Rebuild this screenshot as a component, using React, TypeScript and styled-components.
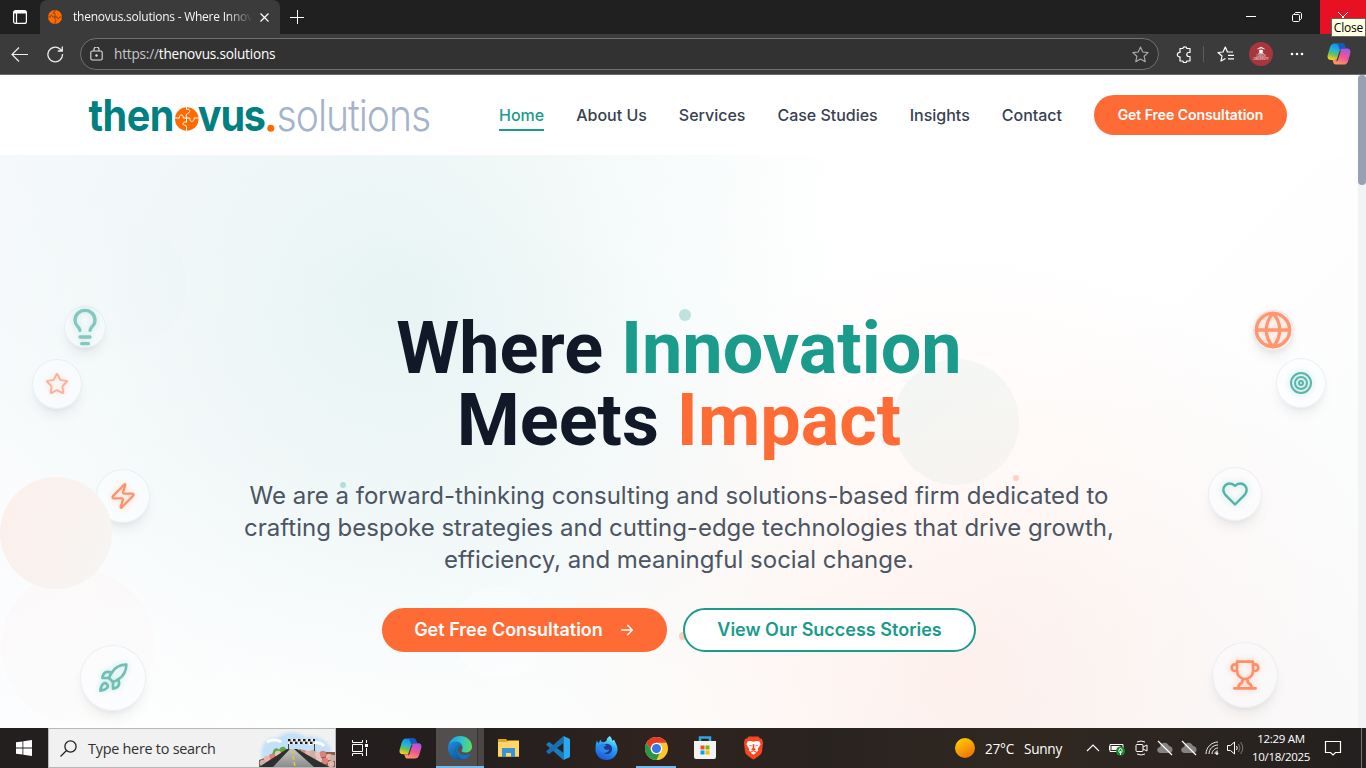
import React from "react";
import styled, { createGlobalStyle } from "styled-components";
import { Globe, Lightbulb, Rocket, Star, Zap } from "lucide-react";

const TEAL = "#1a9b8c";
const ORANGE = "#ff6b35";
const UI_FONT = '"Open Sans", "Noto Sans", sans-serif';

const GlobalStyle = createGlobalStyle`
  * { box-sizing: border-box; }
  body { margin: 0; overflow: hidden; background: #202020; font-family: Inter, sans-serif; }
  svg { display: block; flex: none; }
`;

const Screen = styled.div`
  display: flex;
  flex-direction: column;
  width: 1366px;
  height: 768px;
  overflow: hidden;
`;

/* ---------- browser chrome ---------- */

const TitleBar = styled.div`
  display: flex;
  height: 34px;
  background: #202020;
  font-family: ${UI_FONT};
`;

const TabActions = styled.div`
  width: 40px;
  display: flex;
  align-items: center;
  justify-content: center;
`;

const Tab = styled.div`
  width: 240px;
  display: flex;
  align-items: center;
  padding: 0 8px;
  background: #3b3b3b;
  border-radius: 7px 7px 0 0;
  color: #f5f5f5;
`;

const TabTitle = styled.div`
  width: 178px;
  margin-left: 11px;
  margin-right: 9px;
  overflow: hidden;
  white-space: nowrap;
  font-size: 12px;
  line-height: 18px;
  letter-spacing: -0.24px;
  mask-image: linear-gradient(90deg, #000 154px, transparent 180px);
`;

const NewTab = styled.div`
  width: 34px;
  display: flex;
  align-items: center;
  justify-content: center;
`;

const WindowControls = styled.div`
  position: relative;
  display: flex;
  margin-left: auto;
`;

const WindowButton = styled.div<{ $danger?: boolean }>`
  width: 46px;
  height: 34px;
  display: flex;
  align-items: center;
  justify-content: center;
  background: ${(p) => (p.$danger ? "#e81123" : "transparent")};
`;

const Tooltip = styled.div`
  position: absolute;
  right: 0;
  top: 18px;
  width: 35px;
  height: 19px;
  z-index: 3;
  background: #ffffe1;
  border: 1px solid #646464;
  color: #000;
  font-size: 12px;
  line-height: 17px;
  text-align: center;
  letter-spacing: -0.2px;
`;

const Toolbar = styled.div`
  display: flex;
  align-items: center;
  height: 41px;
  padding: 0 15px 0 11px;
  background: #3b3b3b;
  border-bottom: 1px solid #6a6a6a;
  font-family: ${UI_FONT};
`;

const ReloadIcon = styled.svg`
  margin-left: 19px;
  margin-right: 1px;
`;

const AddressBar = styled.div`
  display: flex;
  align-items: center;
  width: 1079px;
  height: 32px;
  margin-left: 15px;
  padding: 0 9px 0 9px;
  border: 1px solid #707070;
  border-radius: 16px;
  background: #323232;
`;

const Url = styled.div`
  margin-left: 11px;
  flex: 1;
  color: #fff;
  font-size: 13.6px;
  letter-spacing: -0.2px;
  line-height: 20px;
  span { color: #c8c8c8; }
`;

const ToolbarActions = styled.div`
  display: grid;
  flex: 1;
  grid-template-columns: 38px 1px 42px 30px 42px 1fr;
  align-items: center;
  justify-items: center;
  padding-left: 6px;
  > :last-child { justify-self: end; }
`;

const Divider = styled.div`
  width: 1px;
  height: 16px;
  background: #5d5d5d;
`;

/* ---------- website ---------- */

const Viewport = styled.div`
  display: flex;
  height: 653px;
  background: #fff;
`;

const Page = styled.div`
  width: 1358px;
  height: 653px;
  overflow: hidden;
`;

const ScrollTrack = styled.div`
  width: 8px;
  background: #f1f3f5;
`;

const ScrollThumb = styled.div`
  height: 110px;
  background: #98a1b3;
  border-radius: 4px;
`;

const SiteHeader = styled.header`
  height: 80px;
  display: flex;
  align-items: center;
  justify-content: space-between;
  padding: 0 71px 0 88px;
  background: #fff;
`;

const Nav = styled.nav`
  display: flex;
  align-items: center;
  gap: 32px;
`;

const NavLink = styled.a<{ $active?: boolean }>`
  height: 32px;
  padding-top: 4px;
  border-bottom: 2px solid ${(p) => (p.$active ? TEAL : "transparent")};
  color: ${(p) => (p.$active ? TEAL : "#374151")};
  font-size: 16px;
  font-weight: 500;
  line-height: 24px;
  letter-spacing: -0.01px;
  white-space: nowrap;
`;

const HeaderButton = styled.a`
  width: 193px;
  height: 40px;
  border-radius: 20px;
  background: ${ORANGE};
  color: #fff;
  font-size: 14px;
  font-weight: 600;
  line-height: 40px;
  letter-spacing: -0.05px;
  text-align: center;
`;

const Hero = styled.section`
  position: relative;
  height: 573px;
  padding-top: 158px;
  overflow: hidden;
  background:
    radial-gradient(ellipse 460px 400px at 400px 135px, rgba(26, 155, 140, 0.085), rgba(26, 155, 140, 0.036) 50%, transparent),
    radial-gradient(ellipse 430px 430px at 965px 520px, rgba(255, 107, 53, 0.09), rgba(255, 107, 53, 0.04) 50%, transparent),
    radial-gradient(ellipse 420px 320px at 480px 380px, rgba(26, 120, 140, 0.035), transparent),
    linear-gradient(135deg, #f6f9fb 0%, #fff 45%, #fff 65%, #f9fafb 100%);
`;

const Orb = styled.i<{ $x: number; $y: number; $size: number; $fill: string }>`
  position: absolute;
  left: ${(p) => p.$x - p.$size / 2}px;
  top: ${(p) => p.$y - 155 - p.$size / 2}px;
  width: ${(p) => p.$size}px;
  height: ${(p) => p.$size}px;
  border-radius: 50%;
  background: ${(p) => p.$fill};
`;

const FloatingBadge = styled.div<{ $x: number; $y: number; $size: number; $color: string; $alpha: number; $glass: number }>`
  position: absolute;
  left: ${(p) => p.$x - p.$size / 2}px;
  top: ${(p) => p.$y - 155 - p.$size / 2}px;
  width: ${(p) => p.$size}px;
  height: ${(p) => p.$size}px;
  display: flex;
  align-items: center;
  justify-content: center;
  border: 1px solid rgba(222, 230, 243, 0.6);
  border-radius: 50%;
  background: rgba(252, 253, 255, ${(p) => p.$glass});
  box-shadow: 0 9px 14px -3px rgba(0, 0, 0, 0.07), 0 4px 6px -4px rgba(0, 0, 0, 0.07);
  color: ${(p) => p.$color};
  svg {
    opacity: ${(p) => p.$alpha};
    filter: drop-shadow(0 0 3px ${(p) => p.$color}66);
  }
`;

const HeroContent = styled.div`
  position: relative;
  display: flex;
  flex-direction: column;
  align-items: center;
  text-align: center;
`;

const Headline = styled.h1`
  margin: 0;
  color: #111827;
  font-family: Roboto, sans-serif;
  font-size: 72px;
  font-weight: 700;
  line-height: 72px;
`;

const Accent = styled.span<{ $tone: string }>`
  color: ${(p) => p.$tone};
`;

const Lead = styled.p`
  width: 896px;
  margin: 23px 0 32px;
  color: #4b5563;
  font-size: 24px;
  line-height: 32px;
`;

const Actions = styled.div`
  display: flex;
  gap: 16px;
`;

const ActionButton = styled.a<{ $outlined?: boolean }>`
  display: flex;
  align-items: center;
  justify-content: center;
  gap: 16px;
  width: ${(p) => (p.$outlined ? 293 : 285)}px;
  height: 44px;
  padding-bottom: 1px;
  border-radius: 22px;
  border: 2px solid ${(p) => (p.$outlined ? TEAL : ORANGE)};
  background: ${(p) => (p.$outlined ? "#fff" : ORANGE)};
  color: ${(p) => (p.$outlined ? TEAL : "#fff")};
  font-size: 18px;
  font-weight: 600;
  white-space: nowrap;
`;

/* ---------- taskbar ---------- */

const Taskbar = styled.div`
  display: flex;
  height: 40px;
  background: linear-gradient(90deg, #231f1f 0%, #241f1e 35%, #30231f 48%, #292320 60%, #302720 75%, #2a2420 90%, #221f1e 100%);
  color: #fff;
  font-family: ${UI_FONT};
`;

const TaskCell = styled.div<{ $w?: number; $state?: "active" | "open" }>`
  width: ${(p) => p.$w ?? 49}px;
  height: 40px;
  display: flex;
  align-items: center;
  justify-content: center;
  background: ${(p) => (p.$state === "active" ? "linear-gradient(90deg, #524e4d 41px, #383434 41px, #383434 42px, #4a4645 42px)" : "transparent")};
  box-shadow: ${(p) => (p.$state ? "inset 0 -2px #76b9ed" : "none")};
`;

const SearchBox = styled.div`
  display: flex;
  align-items: center;
  width: 288px;
  height: 40px;
  padding-left: 11px;
  background: #f1f1f1;
  border: 1px solid #b9b9b9;
  color: #303030;
  font-size: 14.4px;
  letter-spacing: -0.25px;
  gap: 11px;
  overflow: hidden;
  white-space: nowrap;
  > svg:last-child { margin-left: auto; }
`;

const Weather = styled.div`
  display: flex;
  align-items: center;
  margin-left: auto;
  font-size: 13.6px;
  letter-spacing: -0.25px;
  gap: 10px;
  white-space: nowrap;
`;

const Tray = styled.div`
  display: flex;
  align-items: center;
  gap: 6px;
  margin-left: 22px;
`;

const Clock = styled.div`
  width: 66px;
  margin-left: 4px;
  padding-top: 2px;
  font-size: 11.5px;
  letter-spacing: -0.3px;
  line-height: 18px;
  text-align: center;
  white-space: nowrap;
`;

const NotificationArea = styled.div`
  width: 52px;
  display: flex;
  align-items: center;
  justify-content: space-between;
  padding: 0 4px 0 10px;
`;

const ShowDesktop = styled.div`
  width: 1px;
  height: 40px;
  background: #777;
`;

/* ---------- drawings ---------- */

const line = { fill: "none", stroke: "currentColor", strokeLinecap: "round", strokeLinejoin: "round" } as const;

const PuzzleBall = ({ size, gap }: { size: number; gap: string }) => (
  <svg width={size} height={size} viewBox="0 0 24 24">
    <circle cx="12" cy="12" r="12" fill="#ff6a00" />
    <path d="M12 0v3c-4-1-4 4 0 3v6c0 1-1 5 1 5s-1 5-1 3v4M0 12h4c-1-4 4-4 4 0h8c-1 4 4 4 4 0h4" fill="none" stroke={gap} strokeWidth="1.3" />
  </svg>
);

const Logo = () => (
  <svg width="344" height="60" viewBox="88 85 344 60" fontFamily="Inter, sans-serif">
    <text transform="translate(88.500 131) scale(.91 1)" fontSize="43.500" fontWeight="700" fill="#008080" textLength="94.500" lengthAdjust="spacing">then</text>
    <g transform="translate(175 107)">
      <circle cx="11.800" cy="12" r="11.800" fill="#ff6a00" />
      <path d="M11.500 0v2.500c3-1.500 5 2.500 1 4-2 .5-1 2-1 5.500v3.200c-4-1.300-5 3.500-.6 3.100l.6 2V24M0 11h4.500c-1-4 4.700-4 3.700 0H15c-1 5 5.500 4 4 0h5" fill="none" stroke="#fff" strokeWidth="1" />
    </g>
    <text transform="translate(197.800 131) scale(.91 1)" fontSize="43.500" fontWeight="700" fill="#008080" textLength="75" lengthAdjust="spacing">vus</text>
    <circle cx="270.800" cy="128.200" r="3.500" fill="#ff6a00" />
    <text transform="translate(276.500 131) scale(.9 1)" fontSize="43.500" fontWeight="300" fill="#a5b4cb" textLength="172" lengthAdjust="spacing">solutions</text>
  </svg>
);

const Trophy = () => (
  <svg width="32" height="32" viewBox="0 0 24 24" strokeWidth="2" {...line}>
    <path d="M6 9H4.500a2.500 2.500 0 0 1 0-5H6M18 9h1.500a2.500 2.500 0 0 0 0-5H18M4 22h16M10 14.660V17c0 .55-.47.98-.97 1.210C7.850 18.750 7 20.240 7 22M14 14.660V17c0 .55.47.98.97 1.210C16.150 18.750 17 20.240 17 22M18 2H6v7a6 6 0 0 0 12 0V2Z" />
  </svg>
);

const Target = () => (
  <svg width="24" height="24" viewBox="0 0 24 24" strokeWidth="2" {...line}>
    <circle cx="12" cy="12" r="10" /><circle cx="12" cy="12" r="6" /><circle cx="12" cy="12" r="2" />
  </svg>
);

const Heart = () => (
  <svg width="28" height="28" viewBox="0 0 24 24" strokeWidth="2" {...line}>
    <path d="M19 14c1.490-1.460 3-3.210 3-5.500A5.500 5.500 0 0 0 16.500 3c-1.760 0-3 .5-4.500 2-1.500-1.500-2.740-2-4.500-2A5.500 5.500 0 0 0 2 8.500c0 2.300 1.500 4.050 3 5.500l7 7Z" />
  </svg>
);

const Copilot = ({ size, id }: { size: number; id: string }) => (
  <svg width={size} height={size} viewBox="0 0 24 24">
    <defs>
      <linearGradient id={`${id}a`} x1="0.6" y1="0" x2="0.3" y2="1">
        <stop offset="0" stopColor="#1687e8" /><stop offset="0.45" stopColor="#22b8d4" /><stop offset="0.7" stopColor="#72bf51" /><stop offset="1" stopColor="#ffd11a" />
      </linearGradient>
      <linearGradient id={`${id}b`} x1="0.7" y1="0" x2="0.3" y2="1">
        <stop offset="0" stopColor="#a855e8" /><stop offset="0.5" stopColor="#ee5595" /><stop offset="1" stopColor="#ff9a5c" />
      </linearGradient>
    </defs>
    <path d="M15 1.500c2 0 2.500 1.300 3 3l.7 2h-3.200c-1.600 0-2.300 1-2.800 2.600l-2 6.200C10 17 9.200 18 7.500 18H4c-3.200 0-4-2.400-3.100-5.400l2-7C3.800 3 5 1.500 7.500 1.500z" fill={`url(#${id}a)`} />
    <path d="M9 22.500c-2 0-2.500-1.300-3-3L5.500 18h2.200c1.800 0 2.600-1 3.100-2.700l2-6.200c.5-1.600 1.200-2.600 2.800-2.600H20c3.200 0 4 2.400 3.100 5.400l-2 7c-.9 2.600-2.100 3.600-4.600 3.600z" fill={`url(#${id}b)`} />
    <path d="M15 1.500c2 0 2.500 1.300 3 3l.7 2h-3.200c-1.300 0-2.100.7-2.600 1.900L11.500 4c-.5-1.500-1-2.500-2.500-2.500z" fill="#1757c2" />
    <path d="m12.300 10-2.200 7.200c-.4 1-.7 1.500-.3 2.200.6-.4 1-1 1.300-2l2-6.500c.4-1.300.8-2 1.500-2.400-1.200-.3-1.900.3-2.300 1.500z" fill="#3b3b3b" />
  </svg>
);

const EdgeLogo = () => (
  <svg width="24" height="24" viewBox="0 0 24 24">
    <defs>
      <linearGradient id="edgeTop" x1="0" y1="0.4" x2="1" y2="0.5"><stop offset="0" stopColor="#1b9de2" /><stop offset="0.55" stopColor="#2fc4cf" /><stop offset="1" stopColor="#62dc58" /></linearGradient>
      <linearGradient id="edgeLow" x1="0" y1="0" x2="0.6" y2="1"><stop offset="0" stopColor="#1b8ede" /><stop offset="1" stopColor="#0c59a4" /></linearGradient>
    </defs>
    <path d="M.3 10.500C1 4.500 6 0 12 0c7 0 12 5 12 10.500 0 4-3 6-6.500 6-3 0-4.500-1.200-4-2 .8-.8 1-1.500 1-2.500C14.500 8 11 6 8 6 4 6 1.200 8 .3 10.500z" fill="url(#edgeTop)" />
    <path d="M0 12c0-4 3.500-6.500 8-6.500 3.500 0 6.500 2.500 6.500 6.500-.3-1.500-1.500-2.500-3-2.500C8 10 7 13 7.500 15.500 8.300 20 12 23 16 23.300 14.500 24 13 24 12 24 5 24 0 18.500 0 12z" fill="url(#edgeLow)" />
    <path d="M8.500 11C6.500 15 9.500 22.500 16.500 23.200c2.500-.9 4.600-2.600 6-4.800.3-.6-.2-.8-.7-.5C17 20.500 9.500 18.500 10 13c.1-1.300.8-2.500 1.500-3.500-1.200 0-2.300.5-3 1.500z" fill="#1370bd" />
  </svg>
);

const FolderLogo = () => (
  <svg width="21" height="20" viewBox="0 0 21 20">
    <path d="M0 1h8l2 2h11v16H0z" fill="#e5a51b" />
    <path d="M0 4h9l1.500-1.500H21V18H0z" fill="#ffd665" />
    <path d="M4 10h13v9h-4v-4H8v4H4z" fill="#3393dc" />
  </svg>
);

const CodeLogo = () => (
  <svg width="24" height="24" viewBox="0 0 24 24">
    <path d="M17.500 17 3.500 6.200c-.5-.4-1 0-1.200.2L.7 7.700c-.5.5-.4 1.100 0 1.500L17.500 24z" fill="#187dc0" />
    <path d="M.7 16.300c-.5-.4-.5-1 0-1.500L17.500 0v7L3.500 17.800c-.4.4-.9.3-1.300 0z" fill="#1670b3" />
    <path d="m17.500 0 5.500 2.500c.6.3 1 .8 1 1.500v16c0 .7-.4 1.200-1 1.500L17.500 24z" fill="#2aa8f0" />
  </svg>
);

const FirefoxLogo = () => (
  <svg width="23" height="24" viewBox="0 0 24 25">
    <defs><linearGradient id="fox" x1="0.7" y1="0" x2="0.3" y2="1"><stop offset="0" stopColor="#85f2ff" /><stop offset="0.4" stopColor="#27a6f5" /><stop offset="1" stopColor="#1b55d9" /></linearGradient></defs>
    <path d="M15.500 0c1.500 2 2.500 3.500 2.500 5l2-1.200C20.500 6 23.500 9 23.500 14c0 6-5 11-11.500 11S.5 20 .5 14c0-3 .3-6 1.300-9L4 7.500l1.500-4c.5 2 2 3 4 3L12 5c.2-2 1.500-4 3.500-5z" fill="url(#fox)" />
    <circle cx="12.500" cy="13.500" r="5.400" fill="#24378e" />
    <path d="M4 10c3-3 6-1 8-.5-1 1.500-3 1-3 2.500 1 2 3 3 6 2-1 4-8 5-9.500 1z" fill="#2d86ec" />
  </svg>
);

const ChromeLogo = () => (
  <svg width="23" height="23" viewBox="0 0 24 24">
    <circle cx="12" cy="12" r="12" fill="#fcc62d" />
    <path d="M1.600 6A12 12 0 0 1 22.400 6H12a6 6 0 0 0-5.200 9z" fill="#e33b2e" />
    <path d="M1.600 6 6.800 15A6 6 0 0 0 12 18l3.200-.9L12 24A12 12 0 0 1 1.600 6z" fill="#279847" />
    <circle cx="12" cy="12" r="6" fill="#fff" /><circle cx="12" cy="12" r="4.700" fill="#3579e8" />
  </svg>
);

const StoreLogo = () => (
  <svg width="24" height="24" viewBox="0 0 24 24">
    <path d="M7 5V1.500h10V5" fill="none" stroke="#27a9e1" strokeWidth="2.500" />
    <path d="M1 5h22v16a2 2 0 0 1-2 2H3a2 2 0 0 1-2-2z" fill="#f3f3f3" />
    <path d="M7.500 9.500h4v4h-4z" fill="#f25022" /><path d="M12.500 9.500h4v4h-4z" fill="#7fba00" />
    <path d="M7.500 14.500h4v4h-4z" fill="#00a4ef" /><path d="M12.500 14.500h4v4h-4z" fill="#ffb900" />
  </svg>
);

const BraveLogo = () => (
  <svg width="19" height="24" viewBox="0 0 20 24">
    <path d="M5 0h10l2 2 2 .5 1 4-1 9c-.5 3-2.500 5-9 8.500C3.500 20.500 1.500 18.500 1 15.500l-1-9 1-4L3 2z" fill="#fb4520" />
    <path d="m4 5 3-.5 3 .8 3-.8 3 .5 1.500 3-3 5 .5 2-2 1-2-1.500h-2L7 16l-2-1 .5-2-3-5z" fill="#fff" />
    <path d="m4.500 8.500 4 1-1 1zM15.500 8.500l-4 1 1 1zM9 8h2l-.3 4 2 1.300-2.700 1.500-2.700-1.500 2-1.300z" fill="#fb4520" />
    <path d="m7 17 3-1.500 3 1.500-3 2z" fill="#fff" />
  </svg>
);

const STONES = [[44, 24], [49, 25], [54, 24], [59, 26], [64, 25], [70, 28], [54, 29], [60, 31], [66, 32], [72, 35], [74, 29], [19, 25], [13, 28], [8, 30], [4, 34]];

const RoadScene = () => (
  <svg width="76" height="38" viewBox="0 0 76 38">
    <defs>
      <filter id="cloudEdge"><feGaussianBlur stdDeviation="1.800" /></filter>
      <linearGradient id="asphalt" x1="0" y1="0" x2="0" y2="1"><stop offset="0" stopColor="#c4c4c4" /><stop offset="1" stopColor="#8c8c8c" /></linearGradient>
    </defs>
    <path d="M3 31C0 16 7 8 19 9 24 2 40 2 46 8c12-2 23 3 26 12v14z" fill="#c2e1f8" filter="url(#cloudEdge)" />
    <path d="M8 13c5-3 12-2 14 0M50 15c6-3 13-1 15 2" stroke="#fff" strokeWidth="3" fill="none" />
    <path d="M14 23c0-4 5-5 6-2 2-5 7-4 8 1 4-3 7-1 8 1l5-3 4 2 13 1v2H13z" fill="#5fa83e" />
    <path d="m0 31 22-8 14-2 18 2 22 0v15H0z" fill="#8a5a42" />
    {STONES.map(([x, y], i) => (
      <circle key={i} cx={x} cy={y} r="3.200" fill={["#d9827d", "#eab3a8", "#c9b1aa", "#e8c5bb"][i % 4]} />
    ))}
    <path d="M0 38 28 20h10l32 18z" fill="#2f2f2f" />
    <path d="m14 38 17-18h4l20 18z" fill="url(#asphalt)" />
    <path d="m33 21 3 17" stroke="#e7c92e" strokeWidth="1.500" strokeDasharray="4 2" />
    <path d="M29.500 11v10M55.500 11v11" stroke="#444" />
    <path d="M29 10h27v5H29z" fill="#eee" />
    <path d="M29 11.200h27M31 13.800h25" stroke="#202020" strokeWidth="2.300" strokeDasharray="2.500 2.500" />
  </svg>
);

const MutedCloud = () => (
  <svg width="18" height="16" viewBox="0 0 18 16">
    <path d="M4 13C-.5 12 1 7 4 7c.5-5 7-6 9-1 4 0 5 6 1 7z" fill="#858281" />
    <path d="m2 1 14 14" stroke="#fff" strokeWidth="1.200" />
  </svg>
);

const NAV = ["Home", "About Us", "Services", "Case Studies", "Insights", "Contact"];

const ORBS = [
  { x: 125, y: 285, size: 124, fill: "linear-gradient(90deg, transparent 30%, rgba(26,155,140,.012))" },
  { x: 78, y: 647, size: 154, fill: "linear-gradient(160deg, rgba(255,107,53,.022), rgba(255,107,53,.006))" },
  { x: 956, y: 422, size: 126, fill: "linear-gradient(135deg, rgba(26,155,140,.055), rgba(100,140,115,.045))" },
  { x: 499, y: 632, size: 92, fill: "rgba(255,255,255,.35)" },
  { x: 685, y: 315, size: 12, fill: "rgba(26,155,140,.26)" },
  { x: 343, y: 485, size: 6, fill: "rgba(26,155,140,.28)" },
  { x: 1016, y: 478, size: 6, fill: "rgba(255,107,53,.28)" },
  { x: 683, y: 636, size: 8, fill: "rgba(255,107,53,.3)" },
];

const BADGES = [
  { x: 85, y: 327, size: 42, color: TEAL, alpha: 0.52, glass: 0.3, icon: <Lightbulb size={40} strokeWidth={2} /> },
  { x: 57, y: 384, size: 50, color: ORANGE, alpha: 0.5, glass: 0.5, icon: <Star size={24} /> },
  { x: 123, y: 496, size: 54, color: ORANGE, alpha: 0.72, glass: 0.6, icon: <Zap size={28} /> },
  { x: 113, y: 678, size: 66, color: TEAL, alpha: 0.62, glass: 0.6, icon: <Rocket size={32} /> },
  { x: 1273, y: 330, size: 41, color: ORANGE, alpha: 0.7, glass: 0.6, icon: <Globe size={40} /> },
  { x: 1301, y: 383, size: 50, color: TEAL, alpha: 0.72, glass: 0.6, icon: <Target /> },
  { x: 1235, y: 494, size: 54, color: TEAL, alpha: 0.75, glass: 0.5, icon: <Heart /> },
  { x: 1245, y: 675, size: 66, color: ORANGE, alpha: 0.75, glass: 0.3, icon: <Trophy /> },
];

export default function App() {
  return (
    <Screen>
      <GlobalStyle />
      <TitleBar>
        <TabActions>
          <svg width="14" height="14" viewBox="0 0 14 14" fill="none" stroke="#fff" strokeWidth="1.200">
            <rect x=".6" y=".6" width="12.800" height="12.800" rx="2" /><path d="M1 3h12M3.500 3v10" /><path d="M1 2h12" strokeWidth="2" />
          </svg>
        </TabActions>
        <Tab>
          <PuzzleBall size={14} gap="#6b3c1e" />
          <TabTitle>thenovus.solutions - Where Innovation</TabTitle>
          <svg width="9" height="9" viewBox="0 0 9 9" stroke="#fff" strokeWidth="1.200"><path d="m.5.5 8 8m0-8-8 8" /></svg>
        </Tab>
        <NewTab><svg width="14" height="14" viewBox="0 0 14 14" stroke="#fff"><path d="M7.500 0v14M0 7.500h14" /></svg></NewTab>
        <WindowControls>
          <WindowButton><svg width="10" height="10" viewBox="0 0 10 10" stroke="#fff"><path d="M0 4.500h10" /></svg></WindowButton>
          <WindowButton>
            <svg width="10" height="10" viewBox="0 0 10 10" fill="none" stroke="#fff"><rect x=".5" y="2.500" width="7" height="7" rx="1" /><path d="M2.500 2V1.500l1-1h5l1 1v5l-1 1H8" /></svg>
          </WindowButton>
          <WindowButton $danger><svg width="10" height="10" viewBox="0 0 10 10" stroke="#fff"><path d="m0 0 10 10m0-10L0 10" /></svg></WindowButton>
          <Tooltip>Close</Tooltip>
        </WindowControls>
      </TitleBar>

      <Toolbar>
        <svg width="17" height="15" viewBox="0 0 17 15" stroke="#eee" strokeWidth="1.200" fill="none"><path d="M17 7.500H1M8 .5l-7 7 7 7" /></svg>
        <ReloadIcon width="17" height="17" viewBox="0 0 17 17" stroke="#eee" strokeWidth="1.300" fill="none"><path d="M15.500 8A7.300 7.300 0 1 1 13 3l2 2M15.300.5V5h-4.500" /></ReloadIcon>
        <AddressBar>
          <svg width="13" height="14" viewBox="0 0 13 14" fill="none" stroke="#ddd" strokeWidth="1.100"><rect x=".8" y="4" width="11.400" height="9" rx="1.500" /><path d="M4 4V2.500a2.500 2.500 0 0 1 5 0V4" /><circle cx="6.500" cy="8.500" r=".7" fill="#ddd" /></svg>
          <Url><span>https://</span>thenovus.solutions</Url>
          <svg width="17" height="17" viewBox="0 0 24 24" stroke="#aaa" strokeWidth="1.600" fill="none" strokeLinejoin="round"><path d="m12 1.500 3.200 7 7.600.8-5.700 5.200 1.600 7.700-6.700-3.900-6.700 3.900 1.600-7.700L1.200 9.300l7.600-.8z" /></svg>
        </AddressBar>
        <ToolbarActions>
          <svg width="16" height="17" viewBox="0 0 16 17" stroke="#fff" strokeWidth="1.200" fill="none" strokeLinejoin="round"><path d="M4 2.500h2.800a2.100 2.100 0 0 1 4.100 0H14v4h-1.200a2 2 0 0 0 0 4H14V15h-3.100a2.100 2.100 0 0 1-4.100 0H4v-4.200a2.200 2.200 0 1 1 0-4.300z" /></svg>
          <Divider />
          <svg width="17" height="16" viewBox="0 0 17 16" stroke="#fff" strokeWidth="1.200" fill="none" strokeLinejoin="round"><path d="M8.500 12.500 4 15l1-5L1 6.500l5-.5 2.300-5L10.500 6H16M11 9.300h6M11 12.800h6" /></svg>
          <svg width="24" height="24" viewBox="0 0 24 24">
            <circle cx="12" cy="12" r="12" fill="#a9363d" />
            <path d="m8.500 7 3.500-2 3.500 2-3.500-1zM10.500 8h3v3h-3zM9 11.500h6" fill="#fff" stroke="#fff" strokeWidth=".5" />
            <text x="12" y="15" fill="#fff" fontSize="2.800" textAnchor="middle" textLength="9" lengthAdjust="spacingAndGlyphs">LONDON</text>
            <text x="12" y="17.800" fill="#fff" fontSize="2.800" textAnchor="middle" textLength="15" lengthAdjust="spacingAndGlyphs">UNIVERSITY</text>
          </svg>
          <svg width="14" height="4" viewBox="0 0 14 4" fill="#fff"><circle cx="2" cy="2" r="1.300" /><circle cx="7" cy="2" r="1.300" /><circle cx="12" cy="2" r="1.300" /></svg>
          <Copilot size={24} id="toolbarCopilot" />
        </ToolbarActions>
      </Toolbar>

      <Viewport>
        <Page>
          <SiteHeader>
            <Logo />
            <Nav>
              {NAV.map((label, i) => <NavLink key={label} $active={i === 0}>{label}</NavLink>)}
              <HeaderButton>Get Free Consultation</HeaderButton>
            </Nav>
          </SiteHeader>
          <Hero>
            {ORBS.map((o, i) => <Orb key={i} $x={o.x} $y={o.y} $size={o.size} $fill={o.fill} />)}
            {BADGES.map((b, i) => (
              <FloatingBadge key={i} $x={b.x} $y={b.y} $size={b.size} $color={b.color} $alpha={b.alpha} $glass={b.glass}>{b.icon}</FloatingBadge>
            ))}
            <Orb $x={56} $y={533} $size={112} $fill="linear-gradient(110deg, #fcefeb, #f6f5f3)" />
            <HeroContent>
              <Headline>
                Where <Accent $tone={TEAL}>Innovation</Accent><br />
                Meets <Accent $tone={ORANGE}>Impact</Accent>
              </Headline>
              <Lead>
                We are a forward-thinking consulting and solutions-based firm dedicated to crafting bespoke
                strategies and cutting-edge technologies that drive growth, efficiency, and meaningful social change.
              </Lead>
              <Actions>
                <ActionButton>
                  Get Free Consultation
                  <svg width="16" height="16" viewBox="0 0 24 24" strokeWidth="2" {...line}><path d="M4 12h16M13 5l7 7-7 7" /></svg>
                </ActionButton>
                <ActionButton $outlined>View Our Success Stories</ActionButton>
              </Actions>
            </HeroContent>
          </Hero>
        </Page>
        <ScrollTrack><ScrollThumb /></ScrollTrack>
      </Viewport>

      <Taskbar>
        <TaskCell $w={48}>
          <svg width="16" height="16" viewBox="0 0 16 16" fill="#fff"><path d="M0 2.300 6.500 1.400v6.200H0zM7.300 1.300 16 0v7.600H7.300zM0 8.400h6.500v6.200L0 13.700zM7.300 8.400H16V16l-8.700-1.300z" /></svg>
        </TaskCell>
        <SearchBox>
          <svg width="17" height="17" viewBox="0 0 17 17" fill="none" stroke="#222" strokeWidth="1.300"><circle cx="10.500" cy="6.500" r="5.600" /><path d="M6.500 10.500.5 16.500" /></svg>
          Type here to search
          <RoadScene />
        </SearchBox>
        <TaskCell $w={48}>
          <svg width="16" height="16" viewBox="0 0 16 16" fill="none" stroke="#fff"><path d="M.5 0v2.500h10V0M.5 16v-2.500h10V16M.5 4.500h10v7H.5zM14.500 0v3M14.500 8v8" /><path d="M13 4h3v3h-3z" fill="#fff" stroke="none" /></svg>
        </TaskCell>
        <TaskCell $w={52}><Copilot size={23} id="taskCopilot" /></TaskCell>
        <TaskCell $w={48} $state="active"><EdgeLogo /></TaskCell>
        <TaskCell><FolderLogo /></TaskCell>
        <TaskCell><CodeLogo /></TaskCell>
        <TaskCell><FirefoxLogo /></TaskCell>
        <TaskCell $w={5} />
        <TaskCell $w={40} $state="open"><ChromeLogo /></TaskCell>
        <TaskCell $w={5} />
        <TaskCell $w={48}><StoreLogo /></TaskCell>
        <TaskCell><BraveLogo /></TaskCell>
        <Weather>
          <svg width="20" height="20" viewBox="0 0 20 20"><defs><linearGradient id="sun" x1="0.2" y1="0" x2="0.8" y2="1"><stop stopColor="#ffd000" /><stop offset="1" stopColor="#ee6c0b" /></linearGradient></defs><circle cx="10" cy="10" r="10" fill="url(#sun)" /></svg>
          <span>27°C</span><span>Sunny</span>
        </Weather>
        <Tray>
          <svg width="18" height="12" viewBox="0 0 18 12" stroke="#fff" strokeWidth="1.200" fill="none"><path d="m3 9 6-6 6 6" /></svg>
          <svg width="18" height="16" viewBox="0 0 18 16"><path d="M2 4.500h13v7H2z" fill="none" stroke="#fff" /><path d="M3.500 6h9v4h-9zM1 6h1v4H1z" fill="#fff" /><circle cx="12.500" cy="11" r="4.500" fill="#168b31" /><path d="M12.500 8c3 3 1 5 0 5s-3-2 0-5zm0 3v4" stroke="#fff" fill="none" /></svg>
          <svg width="18" height="16" viewBox="0 0 18 16" fill="none" stroke="#fff"><rect x="4" y="4.500" width="7" height="7" rx="1" /><path d="m11 7 4-2v6l-4-2M5 2q4-2 8 0M5 14q4 2 8 0" /></svg>
          <MutedCloud /><MutedCloud />
          <svg width="16" height="16" viewBox="0 0 16 16" fill="none" stroke="#eee"><path d="M2 14C2 7 8 2 14 2M5 14c0-5 4-9 9-9M8 14c0-3 3-6 6-6M11 14c0-2 1-3 3-3" /><circle cx="13" cy="13.500" r="1" fill="#fff" /></svg>
          <svg width="18" height="16" viewBox="0 0 18 16" fill="none" stroke="#fff"><path d="M1.500 5.500h3l4-3.500v12l-4-3.500h-3zM10.500 6q1.500 2 0 4" /><path d="M12.500 4q3 4 0 8M14.500 2q4.500 6 0 12" stroke="#777" /></svg>
        </Tray>
        <Clock>12:29 AM<br />10/18/2025</Clock>
        <NotificationArea>
          <svg width="18" height="18" viewBox="0 0 18 18" fill="none" stroke="#fff" strokeWidth="1.200"><path d="M1.500 2.500h15v11h-5L9 16l-2.500-2.500h-5z" /></svg>
          <ShowDesktop />
        </NotificationArea>
      </Taskbar>
    </Screen>
  );
}
